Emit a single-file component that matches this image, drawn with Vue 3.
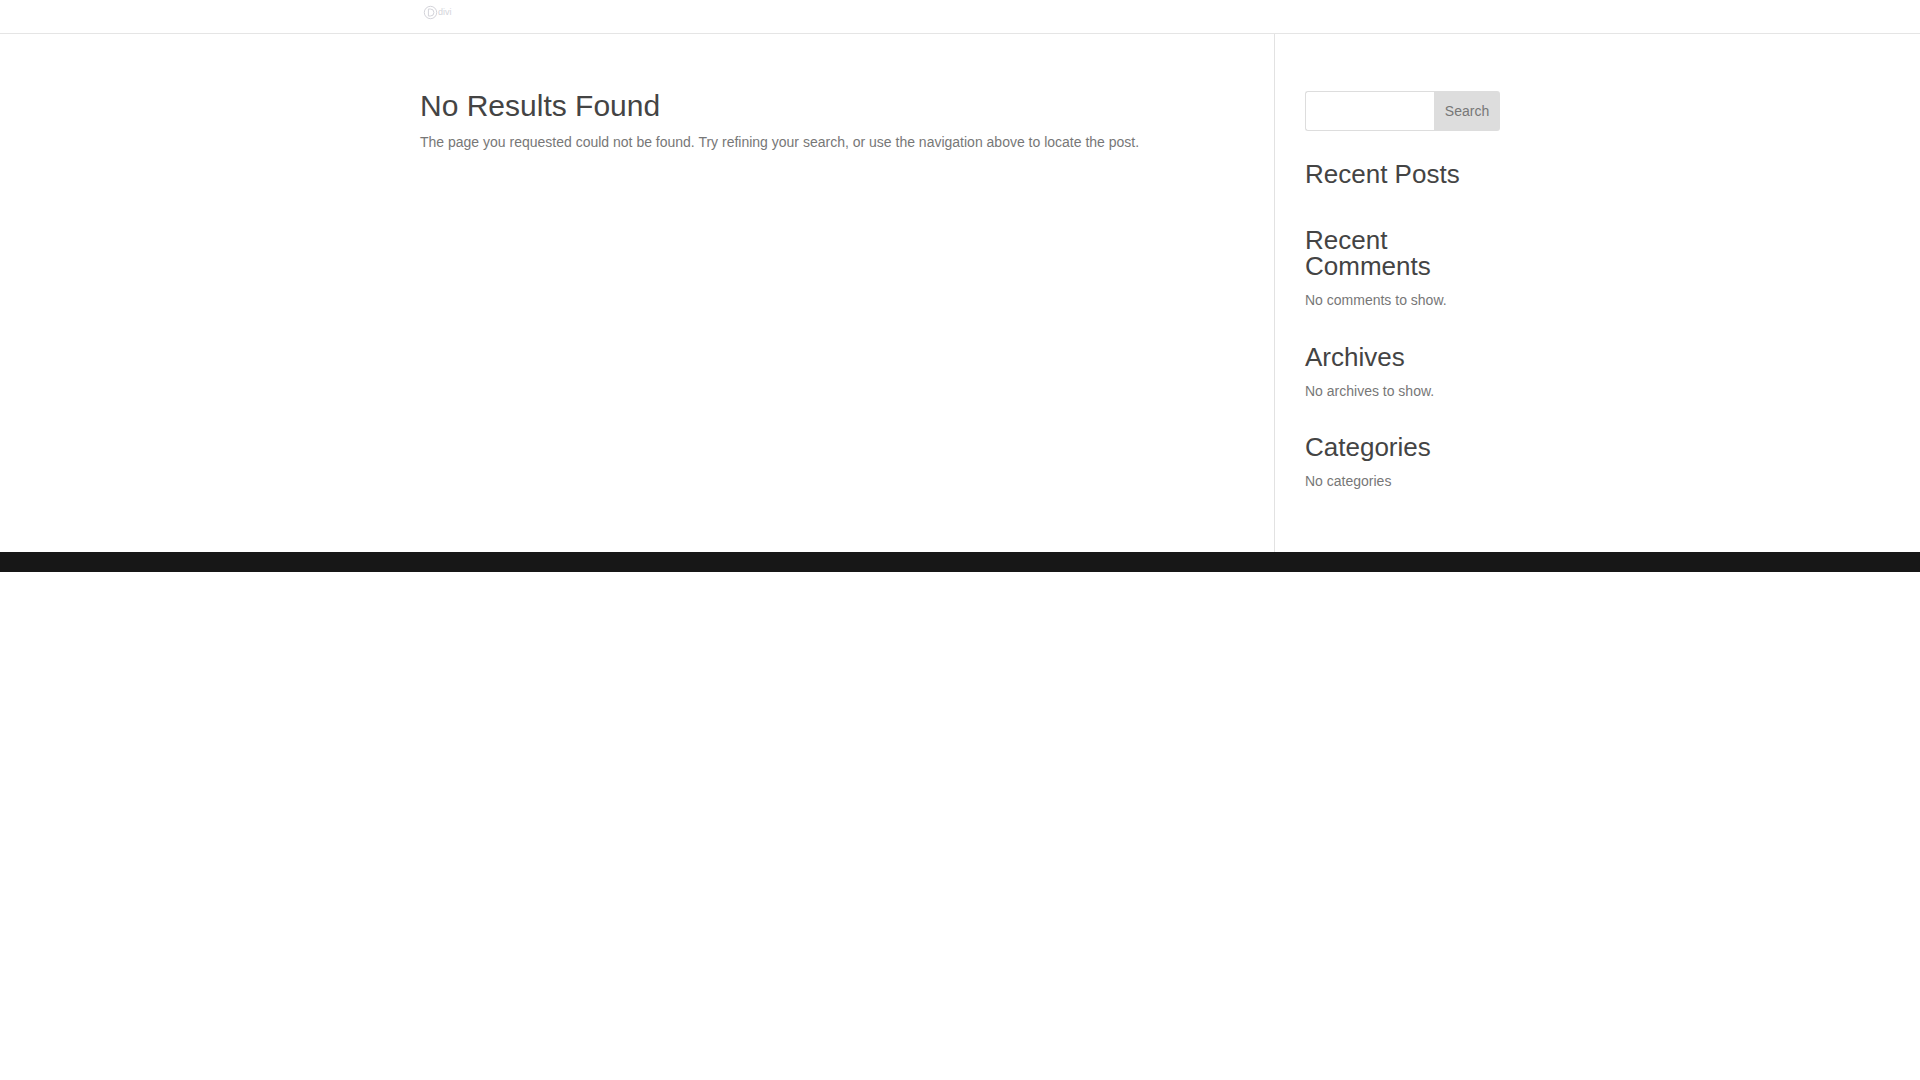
<template>
  <div class="page">
    <header class="top-bar">
      <div class="container">
        <a class="logo" href="#">
          <svg width="32" height="18" viewBox="0 0 32 18">
            <circle cx="8.5" cy="8.5" r="6.2" fill="none" stroke="#d4d4da" stroke-width="1" />
            <path d="M6.4 5h2a3.5 3.5 0 0 1 0 7h-2z" fill="none" stroke="#d4d4da" stroke-width="1" />
            <text x="16" y="11" class="logo-text">divi</text>
          </svg>
        </a>
      </div>
    </header>

    <main class="main">
      <div class="container columns">
        <section class="content">
          <h1>No Results Found</h1>
          <p>The page you requested could not be found. Try refining your search, or use the navigation above to locate the post.</p>
        </section>

        <aside class="sidebar">
          <form class="search" @submit.prevent>
            <input type="text" />
            <button type="submit">Search</button>
          </form>
          <div v-for="w in widgets" :key="w.title" class="widget">
            <h4>{{ w.title }}</h4>
            <p v-if="w.text">{{ w.text }}</p>
          </div>
        </aside>
      </div>
    </main>

    <footer class="footer"></footer>
  </div>
</template>

<script setup>
const widgets = [
  { title: 'Recent Posts', text: '' },
  { title: 'Recent Comments', text: 'No comments to show.' },
  { title: 'Archives', text: 'No archives to show.' },
  { title: 'Categories', text: 'No categories' },
]
</script>

<style>
html, body {
  background: #fff;
}
</style>

<style scoped>
.page {
  font-family: "Liberation Sans", Arial, sans-serif;
  font-size: 14px;
  line-height: 1.7;
  color: #777;
}

.container {
  width: 1080px;
  margin: 0 auto;
}

.top-bar {
  height: 34px;
  border-bottom: 1px solid #e5e5e5;
  box-sizing: border-box;
}

.logo {
  display: block;
  height: 33px;
  padding: 4px 0 0 2px;
  box-sizing: border-box;
}

.logo svg {
  display: block;
}

.logo-text {
  font-size: 9px;
  fill: #d4d4da;
}

.main {
  height: 518px;
}

.columns {
  display: grid;
  grid-template-columns: 854px 226px;
  height: 100%;
}

.content {
  padding-top: 52px;
}

h1 {
  margin: 0;
  font-size: 30px;
  font-weight: 500;
  line-height: 39px;
  color: #444;
  padding-bottom: 6px;
}

p {
  margin: 0;
}

.sidebar {
  border-left: 1px solid #e2e2e2;
  padding: 57px 0 0 30px;
  box-sizing: border-box;
}

.search {
  display: flex;
  height: 40px;
  margin-bottom: 30px;
}

.search input {
  flex: 1;
  min-width: 0;
  box-sizing: border-box;
  height: 100%;
  border: 1px solid #ddd;
  border-right: none;
  border-radius: 3px 0 0 3px;
  background: #fff;
  padding: 0;
}

.search button {
  width: 66px;
  height: 100%;
  border: none;
  border-radius: 0 3px 3px 0;
  background: #ddd;
  color: #777;
  font-family: inherit;
  font-size: 14px;
  padding: 0;
}

.widget {
  margin-bottom: 30px;
}

.widget:nth-of-type(3) {
  margin-top: 31px;
}

h4 {
  margin: 0;
  font-size: 26px;
  font-weight: 500;
  line-height: 26px;
  color: #444;
  padding-bottom: 10px;
}

.footer {
  height: 20px;
  background: #171717;
}
</style>
